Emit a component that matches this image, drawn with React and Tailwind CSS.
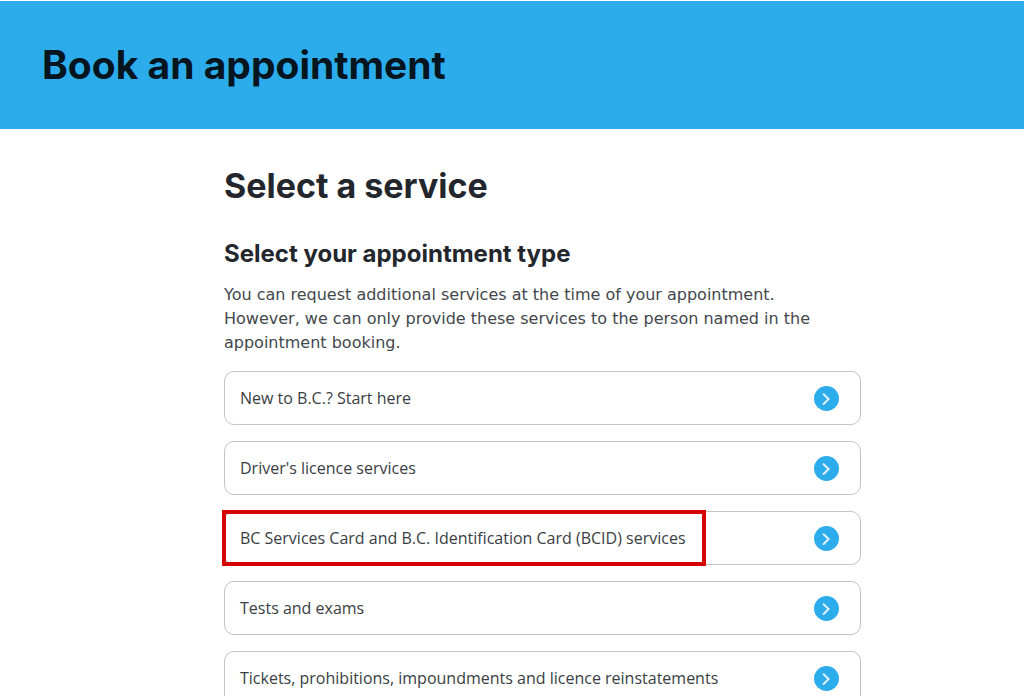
const services = [
    { label: 'New to B.C.? Start here' },
    { label: "Driver's licence services" },
    { label: 'BC Services Card and B.C. Identification Card (BCID) services', highlighted: true },
    { label: 'Tests and exams' },
    { label: 'Tickets, prohibitions, impoundments and licence reinstatements' },
];

function ArrowBadge() {
    return (
        <svg viewBox="0 0 25 25" className="h-[25px] w-[25px] shrink-0" fill="none" aria-hidden="true">
            <circle cx="12.5" cy="12.5" r="12.5" fill="#2dacec" />
            <path
                d="M9.6 8.2l5 4.8-5 5"
                stroke="#e0f2fc"
                strokeWidth="2"
                strokeLinecap="round"
                strokeLinejoin="miter"
            />
        </svg>
    );
}

function ServiceButton({ label, highlighted }) {
    return (
        <button
            type="button"
            className="flex h-[54px] w-full items-center justify-between rounded-[10px] border border-[#c4c4c4] bg-white pr-[21px] pl-[15px] text-left font-['Open_Sans',sans-serif] text-base text-[#3a3e43]"
        >
            <span className="relative">
                {label}
                {highlighted && (
                    <span className="absolute -inset-y-4 -right-5 -left-[18px] border-4 border-[#d60000]" />
                )}
            </span>
            <ArrowBadge />
        </button>
    );
}

export default function App() {
    return (
        <div className="h-screen overflow-hidden bg-white font-['Inter',sans-serif] text-[#23272d]">
            {/* Page banner */}
            <header className="mt-px flex h-[128px] items-center bg-[#2dacec] px-[42px]">
                <h1 className="text-[39px] leading-[48px] font-bold text-[#04151f]">Book an appointment</h1>
            </header>

            {/* Service list */}
            <main className="pt-9 pr-[163px] pl-56">
                <h2 className="text-[34px] leading-[42px] font-bold">Select a service</h2>
                <h3 className="mt-[30px] text-2xl leading-[34px] font-bold">Select your appointment type</h3>
                <p className="mt-3 max-w-[616px] font-['DejaVu_Sans',Verdana,sans-serif] text-base leading-6 text-[#43474c]">
                    You can request additional services at the time of your appointment. However, we can only
                    provide these services to the person named in the appointment booking.
                </p>
                <ul className="mt-4 flex flex-col gap-4">
                    {services.map((service) => (
                        <li key={service.label}>
                            <ServiceButton {...service} />
                        </li>
                    ))}
                </ul>
            </main>
        </div>
    );
}
